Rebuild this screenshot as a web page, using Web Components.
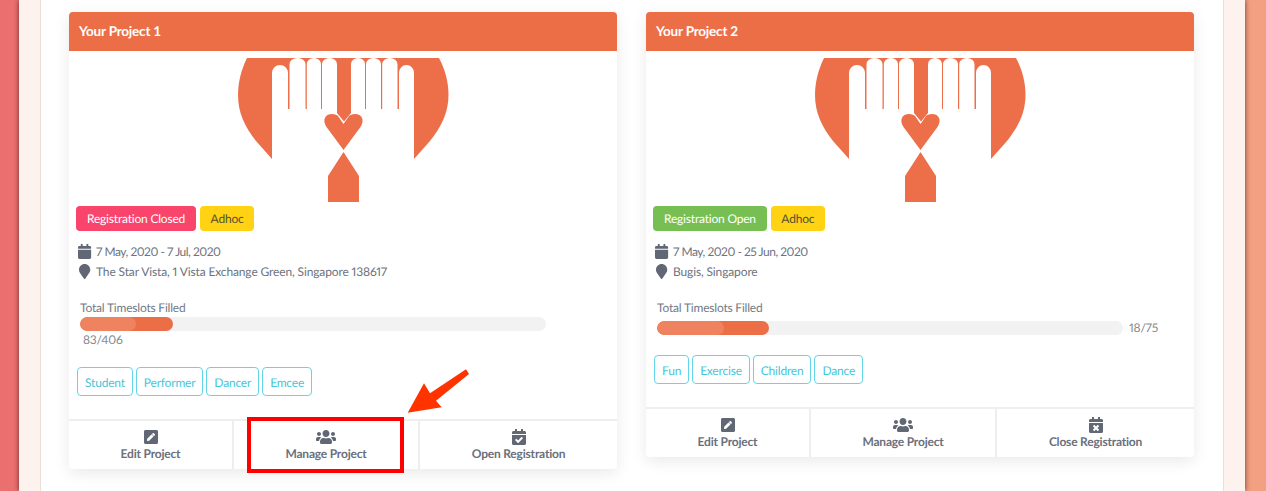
<!DOCTYPE html>
<html lang="en">
<head>
<meta charset="utf-8">
<title>Your Projects</title>
<style>
    html, body { margin: 0; height: 491px; overflow: hidden; }
    body { font-family: Lato, "Open Sans", sans-serif; text-rendering: geometricPrecision; letter-spacing: -.2px; background: linear-gradient(90deg, #ec6f6f, #f3a082); }
</style>
</head>
<body>
<page-shell>
    <project-card title="Your Project 1" dates="7 May, 2020 - 7 Jul, 2020" place="The Star Vista, 1 Vista Exchange Green, Singapore 138617">
        <status-badge slot="badges" kind="closed">Registration Closed</status-badge>
        <status-badge slot="badges" kind="type">Adhoc</status-badge>
        <progress-meter slot="progress" value="93" part-value="56" count="83/406"></progress-meter>
        <tag-chip slot="tags">Student</tag-chip>
        <tag-chip slot="tags">Performer</tag-chip>
        <tag-chip slot="tags">Dancer</tag-chip>
        <tag-chip slot="tags">Emcee</tag-chip>
        <action-button slot="actions" icon="edit">Edit Project</action-button>
        <action-button slot="actions" icon="users" divider>Manage Project</action-button>
        <action-button slot="actions" icon="check" divider>Open Registration</action-button>
    </project-card>
    <project-card title="Your Project 2" dates="7 May, 2020 - 25 Jun, 2020" place="Bugis, Singapore">
        <status-badge slot="badges" kind="open">Registration Open</status-badge>
        <status-badge slot="badges" kind="type">Adhoc</status-badge>
        <progress-meter slot="progress" value="112" part-value="67" count="18/75"></progress-meter>
        <tag-chip slot="tags">Fun</tag-chip>
        <tag-chip slot="tags">Exercise</tag-chip>
        <tag-chip slot="tags">Children</tag-chip>
        <tag-chip slot="tags">Dance</tag-chip>
        <action-button slot="actions" icon="edit">Edit Project</action-button>
        <action-button slot="actions" icon="users" divider>Manage Project</action-button>
        <action-button slot="actions" icon="times" divider>Close Registration</action-button>
    </project-card>
    <guide-callout slot="overlay"></guide-callout>
</page-shell>

<script>
const ICONS = {
    calendar: ['0 0 448 512', 'M12 192h424c6.6 0 12 5.4 12 12v260c0 26.5-21.5 48-48 48H48c-26.5 0-48-21.5-48-48V204c0-6.6 5.4-12 12-12zm436-44v-36c0-26.5-21.5-48-48-48h-48V12c0-6.6-5.4-12-12-12h-40c-6.6 0-12 5.4-12 12v52H160V12c0-6.6-5.4-12-12-12h-40c-6.6 0-12 5.4-12 12v52H48C21.5 64 0 85.5 0 112v36c0 6.6 5.4 12 12 12h424c6.6 0 12-5.4 12-12z'],
    marker: ['0 0 384 512', 'M172.268 501.67C26.97 291.031 0 261.186 0 192 0 85.961 85.961 0 192 0s192 85.961 192 192c0 69.186-26.97 99.031-172.268 309.67-9.535 13.774-29.93 13.773-39.464 0z'],
    edit: ['0 0 448 512', 'M400 480H48c-26.5 0-48-21.5-48-48V80c0-26.5 21.5-48 48-48h352c26.5 0 48 21.5 48 48v352c0 26.5-21.5 48-48 48zM238.1 177.9L102.4 313.6l-6.3 57.1c-.8 7.6 5.6 14.1 13.3 13.3l57.1-6.3L302.2 242c2.3-2.3 2.3-6.1 0-8.5L246.7 178c-2.5-2.4-6.3-2.4-8.6-.1zM345 165.1L314.9 135c-9.4-9.4-24.6-9.4-33.9 0l-23.1 23.1c-2.3 2.3-2.3 6.1 0 8.5l55.5 55.5c2.3 2.3 6.1 2.3 8.5 0L345 199c9.3-9.3 9.3-24.5 0-33.9z'],
    users: ['0 0 640 512', 'M96 224c35.3 0 64-28.7 64-64s-28.7-64-64-64-64 28.7-64 64 28.7 64 64 64zm448 0c35.3 0 64-28.7 64-64s-28.7-64-64-64-64 28.7-64 64 28.7 64 64 64zm32 32h-64c-17.6 0-33.5 7.1-45.1 18.6 40.3 22.1 68.9 62 75.1 109.4h66c17.7 0 32-14.3 32-32v-32c0-35.3-28.7-64-64-64zm-256 0c61.9 0 112-50.1 112-112S381.9 32 320 32 208 82.1 208 144s50.1 112 112 112zm76.8 32h-8.3c-20.8 10-43.9 16-68.5 16s-47.6-6-68.5-16h-8.3C179.6 288 128 339.6 128 403.2V432c0 26.5 21.5 48 48 48h288c26.5 0 48-21.5 48-48v-28.8c0-63.6-51.6-115.2-115.2-115.2zm-223.7-13.4C161.5 263.1 145.6 256 128 256H64c-35.3 0-64 28.7-64 64v32c0 17.7 14.3 32 32 32h65.9c6.3-47.4 34.9-87.3 75.2-109.4z'],
    check: ['0 0 448 512', 'M436 160H12c-6.627 0-12-5.373-12-12v-36c0-26.51 21.49-48 48-48h48V12c0-6.627 5.373-12 12-12h40c6.627 0 12 5.373 12 12v52h128V12c0-6.627 5.373-12 12-12h40c6.627 0 12 5.373 12 12v52h48c26.51 0 48 21.49 48 48v36c0 6.627-5.373 12-12 12zM12 192h424c6.627 0 12 5.373 12 12v260c0 26.51-21.49 48-48 48H48c-26.51 0-48-21.49-48-48V204c0-6.627 5.373-12 12-12zm333.296 95.947l-28.169-28.398c-4.667-4.705-12.265-4.736-16.97-.068L194.12 364.665l-45.98-46.352c-4.667-4.705-12.266-4.736-16.971-.068l-28.397 28.17c-4.705 4.667-4.736 12.265-.068 16.97l82.601 83.269c4.667 4.705 12.265 4.736 16.97.068l142.953-141.805c4.705-4.667 4.736-12.265.068-16.97z'],
    times: ['0 0 448 512', 'M436 160H12c-6.6 0-12-5.4-12-12v-36c0-26.5 21.5-48 48-48h48V12c0-6.6 5.4-12 12-12h40c6.6 0 12 5.4 12 12v52h128V12c0-6.6 5.4-12 12-12h40c6.6 0 12 5.4 12 12v52h48c26.5 0 48 21.5 48 48v36c0 6.6-5.4 12-12 12zM12 192h424c6.6 0 12 5.4 12 12v260c0 26.5-21.5 48-48 48H48c-26.5 0-48-21.5-48-48V204c0-6.6 5.4-12 12-12zm257.3 160l48.1-48.1c4.7-4.7 4.7-12.3 0-17l-28.3-28.3c-4.7-4.7-12.3-4.7-17 0L224 306.7l-48.1-48.1c-4.7-4.7-12.3-4.7-17 0l-28.3 28.3c-4.7 4.7-4.7 12.3 0 17l48.1 48.1-48.1 48.1c-4.7 4.7-4.7 12.3 0 17l28.3 28.3c4.7 4.7 12.3 4.7 17 0l48.1-48.1 48.1 48.1c4.7 4.7 12.3 4.7 17 0l28.3-28.3c4.7-4.7 4.7-12.3 0-17L269.3 352z']
};

function iconSvg(name, height) {
    const [box, d] = ICONS[name];
    return `<svg viewBox="${box}" height="${height}" fill="#616774" aria-hidden="true"><path d="${d}"/></svg>`;
}

class PageShell extends HTMLElement {
    constructor() {
        super();
        this.attachShadow({ mode: 'open' });
        this.shadowRoot.innerHTML = `
            <style>
                :host { display: block; position: relative; height: 491px; padding: 0 21px 0 19px; }
                .cream { height: 100%; padding: 0 21px; background: #fdf2ee; box-shadow: 0 0 5px rgba(50, 20, 15, .75); }
                .sheet { box-sizing: border-box; height: 100%; padding: 12px 28px 0; background: #fff;
                    border: solid #eaded9; border-width: 0 1px; display: grid;
                    grid-template-columns: 548px 548px; column-gap: 29px; align-items: start; }
            </style>
            <div class="cream"><div class="sheet"><slot></slot></div></div>
            <slot name="overlay"></slot>
        `;
    }
}

class HandLogo extends HTMLElement {
    constructor() {
        super();
        this.attachShadow({ mode: 'open' });
        const fingers = [[289.5, 305.5], [306.8, 321], [322, 337], [351, 365], [366, 381], [382.2, 397.5]];
        const whites = fingers.map(([a, b]) =>
            `<path d="M${a} 110V64a${(b - a) / 2} 6 0 0 1 ${b - a} 0V110z"/>`).join('');
        this.shadowRoot.innerHTML = `
            <style>
                :host { display: flex; justify-content: center; padding: 7px 0 0 2px; }
                svg { display: block; }
            </style>
            <svg width="212" height="145" viewBox="238 58 212 145" role="img" aria-label="Hands holding a heart">
                <path fill="#ed6f4a" d="M247 58H439C445.500 70 448.500 83 448.500 95C448.500 113 441 127 430 141L414 159L343 170L272 159L256 141C245 127 238 113 238 95C238 83 241 70 247 58Z"/>
                <g fill="#fff">
                    <path d="M272 170V73a8 8 0 0 1 16 0V109H399V73a7.500 8 0 0 1 15 0V170Z"/>
                    ${whites}
                </g>
                <path fill="#ed6f4a" d="M337 58H351V113L344 121.500L337 113Z"/>
                <path fill="#ed6f4a" d="M343.500 150L326.500 127C322 120 325 114 332 114C335 114 337 115 338 116L343.500 124L349 116C350 115 352 114 355 114C362 114 365 120 360.500 127Z"/>
                <path fill="#ed6f4a" d="M343.500 152L359 176V202H328V176Z"/>
            </svg>
        `;
    }
}

class StatusBadge extends HTMLElement {
    constructor() {
        super();
        this.attachShadow({ mode: 'open' });
        this.shadowRoot.innerHTML = `
            <style>
                :host { display: inline-block; height: 25px; line-height: 25px; padding: 0 11px; border-radius: 4px;
                    font-size: 12px; color: #fff; }
                :host([kind="closed"]) { background: #f9446c; }
                :host([kind="open"]) { background: #77bf52; }
                :host([kind="type"]) { background: #ffd213; color: #555030; padding: 0 10.5px; }
            </style>
            <slot></slot>
        `;
    }
}

class TagChip extends HTMLElement {
    constructor() {
        super();
        this.attachShadow({ mode: 'open' });
        this.shadowRoot.innerHTML = `
            <style>
                :host { display: inline-block; box-sizing: border-box; height: 29px; line-height: 29px; padding: 0 7px;
                    border: 1px solid #62d6e6; border-radius: 4px; font-size: 12px; color: #45c6db; }
            </style>
            <slot></slot>
        `;
    }
}

class ProgressMeter extends HTMLElement {
    constructor() {
        super();
        this.attachShadow({ mode: 'open' });
    }

    connectedCallback() {
        const value = this.getAttribute('value');
        const partValue = this.getAttribute('part-value');
        const count = this.getAttribute('count');
        this.shadowRoot.innerHTML = `
            <style>
                :host { display: block; font-size: 12px; color: #747a85; }
                .label { line-height: 18px; }
                /* same wrap as the site: a long count drops under the bar */
                .row { width: 504px; display: flex; flex-wrap: wrap; align-items: center; column-gap: 3px; }
                .bar { width: 466px; height: 14px; margin-bottom: -2px; border-radius: 7px; background: #f2f2f2; overflow: hidden; }
                .fill { height: 100%; border-radius: 7px; background: #ec6e47; }
                .part { height: 100%; border-radius: 7px; background: #f0835f; }
                .count { line-height: 21px; margin-bottom: -2px; padding-left: 3px; color: #858a92; font-variant-numeric: proportional-nums; }
            </style>
            <div class="label">Total Timeslots Filled</div>
            <div class="row">
                <div class="bar"><div class="fill" style="width:${value}px"><div class="part" style="width:${partValue}px"></div></div></div>
                <span class="count">${count}</span>
            </div>
        `;
    }
}

class ActionButton extends HTMLElement {
    constructor() {
        super();
        this.attachShadow({ mode: 'open' });
    }

    connectedCallback() {
        this.shadowRoot.innerHTML = `
            <style>
                :host { display: flex; flex-direction: column; align-items: center; height: 48px; padding-top: 8px;
                    box-sizing: border-box; font-size: 12px; font-weight: 700; color: #6a707c; cursor: pointer; }
                :host([divider]) { border-left: 2px solid #eeeeee; }
                svg { display: block; }
                .text { line-height: 16px; margin-top: 1px; }
            </style>
            ${iconSvg(this.getAttribute('icon'), 16)}
            <span class="text"><slot></slot></span>
        `;
    }
}

class ProjectCard extends HTMLElement {
    constructor() {
        super();
        this.attachShadow({ mode: 'open' });
    }

    connectedCallback() {
        this.shadowRoot.innerHTML = `
            <style>
                :host { display: block; background: #fff; border-radius: 4px; box-shadow: 0 4px 16px rgba(0, 0, 0, .09); }
                header { height: 39px; line-height: 38px; padding: 0 10px; background: #ec6e47; border-radius: 4px 4px 0 0;
                    color: #fff; font-size: 13.5px; font-weight: 700; }
                .body { padding: 3px 7px 0; }
                .badges { display: flex; gap: 4px; }
                .info { margin-top: 10px; padding-left: 1px; font-size: 12px; color: #6d7380; font-variant-numeric: proportional-nums; }
                .line { display: flex; align-items: center; height: 20px; gap: 3px; }
                .line .ic { width: 16px; display: flex; justify-content: center; }
                .dates { letter-spacing: -.48px; }
                .place { letter-spacing: -.13px; }
                .progress { margin-top: 18px; padding-left: 4px; }
                .tags { display: flex; gap: 3px; margin-top: 19px; padding: 0 1px 23px; }
                .actions { display: grid; grid-template-columns: 163px 186px 1fr; border-top: 2px solid #eeeeee; }
            </style>
            <header>${this.getAttribute('title')}</header>
            <hand-logo></hand-logo>
            <div class="body">
                <div class="badges"><slot name="badges"></slot></div>
                <div class="info">
                    <div class="line"><span class="ic">${iconSvg('calendar', 15)}</span><span class="dates">${this.getAttribute('dates')}</span></div>
                    <div class="line"><span class="ic">${iconSvg('marker', 15)}</span><span class="place">${this.getAttribute('place')}</span></div>
                </div>
                <div class="progress"><slot name="progress"></slot></div>
                <div class="tags"><slot name="tags"></slot></div>
            </div>
            <div class="actions"><slot name="actions"></slot></div>
        `;
    }
}

class GuideCallout extends HTMLElement {
    constructor() {
        super();
        this.attachShadow({ mode: 'open' });
        this.shadowRoot.innerHTML = `
            <style>
                :host { position: absolute; left: 0; top: 0; width: 1266px; height: 491px; pointer-events: none; }
                .box { position: absolute; left: 247px; top: 417px; width: 149px; height: 48px; border: 4px solid #ff0000; }
                svg { position: absolute; left: 0; top: 0; }
            </style>
            <div class="box"></div>
            <svg width="1266" height="491" viewBox="0 0 1266 491" aria-hidden="true">
                <path fill="#ff3300" d="M407.700 412.700L424 383.300L430 393.300L466 369.300L469 374L436 400.700L441.700 407.300Z"/>
            </svg>
        `;
    }
}

customElements.define('page-shell', PageShell);
customElements.define('hand-logo', HandLogo);
customElements.define('status-badge', StatusBadge);
customElements.define('tag-chip', TagChip);
customElements.define('progress-meter', ProgressMeter);
customElements.define('action-button', ActionButton);
customElements.define('project-card', ProjectCard);
customElements.define('guide-callout', GuideCallout);
</script>
</body>
</html>
